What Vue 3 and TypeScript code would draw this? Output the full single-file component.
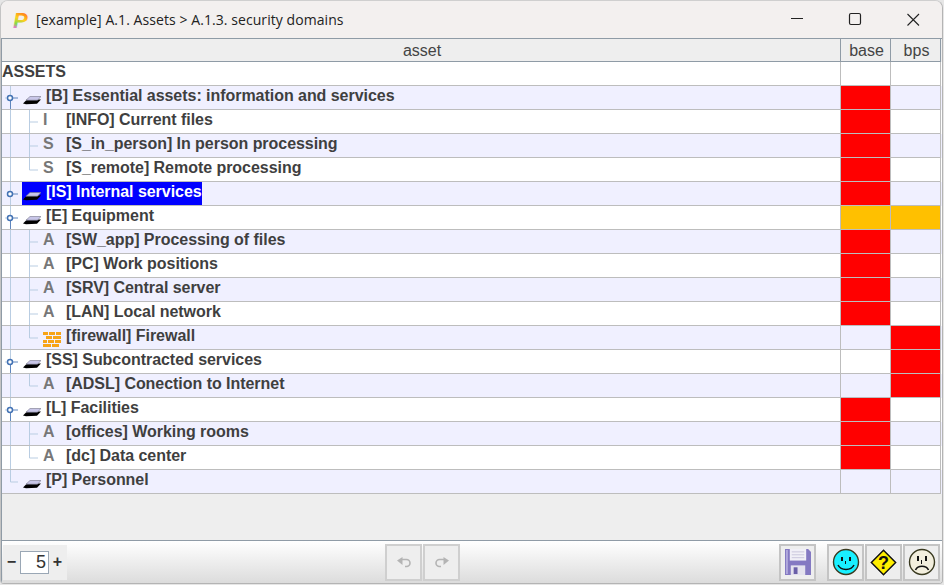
<template>
  <div class="window">
    <div class="titlebar">
      <svg class="logo" width="18" height="28" viewBox="0 0 18 28">
        <defs>
          <linearGradient id="logoGrad" gradientUnits="userSpaceOnUse" x1="10" y1="6" x2="3" y2="22">
            <stop offset="0" stop-color="#ff7f1c" />
            <stop offset="0.4" stop-color="#ffcf1f" />
            <stop offset="0.75" stop-color="#7fdc4a" />
            <stop offset="1" stop-color="#ee6fd4" />
          </linearGradient>
        </defs>
        <text x="1" y="21.500" class="logo-p" fill="url(#logoGrad)">P</text>
      </svg>
      <span class="title">[example] A.1. Assets &gt; A.1.3. security domains</span>
      <div class="winbtns">
        <svg width="58" height="37" viewBox="0 0 58 37"><path d="M23 17.500h12" stroke="#222" /></svg>
        <svg width="58" height="37" viewBox="0 0 58 37"><rect x="23.500" y="12.500" width="11" height="11" rx="1.500" fill="none" stroke="#222" stroke-width="1.200" /></svg>
        <svg width="58" height="37" viewBox="0 0 58 37"><path d="M23.500 13l11.500 11.500M35 13l-11.500 11.500" stroke="#222" stroke-width="1.100" fill="none" /></svg>
      </div>
    </div>

    <div class="body">
      <div class="grid head">
        <div class="hcell">asset</div>
        <div class="hcell">base</div>
        <div class="hcell">bps</div>
      </div>

      <div
        v-for="(row, i) in rows"
        :key="row.label"
        class="grid row"
        :class="{ alt: i % 2 === 1 }"
      >
        <div class="cell tree">
          <svg v-if="row.depth > 0" :width="row.depth === 1 ? 20 : 40" height="23" class="lines">
            <path :d="row.lastTop ? 'M8.500 0V12' : 'M8.500 0V23'" stroke="#b9cde2" fill="none" />
            <template v-if="row.depth === 1">
              <path d="M8.500 12H16" :stroke="row.state === 'leaf' ? '#b9cde2' : '#5f86bd'" fill="none" />
              <path v-if="row.state === 'open'" d="M8.500 12V23" stroke="#5f86bd" fill="none" />
              <path v-if="row.state === 'open'" d="M3 12H8" stroke="#b9cde2" fill="none" />
              <circle v-if="row.state !== 'leaf'" cx="8" cy="12" r="2.500" fill="#fff" stroke="#4272b4" stroke-width="1.500" />
            </template>
            <path v-else :d="row.lastChild ? 'M27.500 0V12H36' : 'M27.500 0V23M27.500 12H36'" stroke="#b9cde2" fill="none" />
          </svg>

          <div class="label" :class="{ selected: row.selected }">
            <svg v-if="row.depth === 1" class="slab" width="18" height="9" viewBox="0 0 18 9">
              <path d="M0 7.500L4 3.500H18L14 7.800L3 8.300Z" fill="#000" />
              <path d="M3 4.200L7 .5H18L14.500 4.200Z" fill="#c8c6e8" stroke="#77778c" stroke-width=".6" />
            </svg>
            <span v-if="row.letter" class="letter">{{ row.letter }}</span>
            <svg v-if="row.wall" class="wall" width="18" height="15" viewBox="0 0 18 15">
              <path
                d="M0 0h5v3H0zM6 0h6v3H6zM13 0h5v3h-5zM3 4h6v3H3zM10 4h8v3h-8zM0 8h4v3H0zM5 8h6v3H5zM12 8h6v3h-6zM0 12h8v3H0zM9 12h7v3H9z"
                fill="#f7a417"
              />
            </svg>
            <span class="text">{{ row.label }}</span>
          </div>
        </div>
        <div class="cell" :class="row.base"></div>
        <div class="cell" :class="row.bps"></div>
      </div>

      <div class="filler"></div>

      <div class="toolbar">
        <div class="stepper">
          <span class="step">−</span>
          <input class="num" value="5" readonly />
          <span class="step">+</span>
        </div>
        <div class="undo">
          <button class="tbtn" aria-label="undo">
            <svg width="16" height="12" viewBox="0 0 16 12">
              <path d="M5 3.500h5.500a3.500 3.500 0 0 1 0 7H9" fill="none" stroke="#b4b4b4" stroke-width="1.600" />
              <path d="M1 4.500L6.500 1V9Z" fill="#b4b4b4" />
            </svg>
          </button>
          <button class="tbtn" aria-label="redo">
            <svg width="16" height="12" viewBox="0 0 16 12">
              <path d="M11 3.500H5.500a3.500 3.500 0 0 0 0 7H7" fill="none" stroke="#b4b4b4" stroke-width="1.600" />
              <path d="M15 4.500L9.500 1V9Z" fill="#b4b4b4" />
            </svg>
          </button>
        </div>
        <div class="right">
          <button class="tbtn light save" aria-label="save">
            <svg width="26" height="26" viewBox="0 0 27 27">
              <path d="M0 0H24L27 3V27H0Z" fill="#8479c2" />
              <path d="M1 1V26H3V1Z" fill="#b0a9dc" />
              <rect x="5" y="0" width="17" height="12" fill="#f1f0f7" />
              <path d="M7 3h13M7 6h13M7 9h13" stroke="#c9c6dc" />
              <rect x="6" y="17" width="15" height="10" fill="#e4e2ee" />
              <rect x="9" y="19" width="4" height="7" fill="#6a5fa8" />
            </svg>
          </button>
          <div class="moods">
            <button class="tbtn" aria-label="happy">
              <svg width="28" height="28" viewBox="0 0 28 28">
                <circle cx="14" cy="14" r="12.500" fill="#19f0ff" stroke="#3a3a20" stroke-width="1.400" />
                <rect x="9" y="9" width="2" height="4" fill="#111" />
                <rect x="17" y="9" width="2" height="4" fill="#111" />
                <path d="M13.500 13v3" stroke="#111" />
                <path d="M6 17c3 6 13 6 16 0" fill="none" stroke="#111" stroke-width="1.500" />
              </svg>
            </button>
            <button class="tbtn" aria-label="unknown">
              <svg width="27" height="27" viewBox="0 0 30 30">
                <path d="M15 1.500L28.500 15L15 28.500L1.500 15Z" fill="#ffee00" stroke="#111" stroke-width="1.600" />
                <text x="15" y="22" class="qm">?</text>
              </svg>
            </button>
            <button class="tbtn" aria-label="sad">
              <svg width="28" height="28" viewBox="0 0 28 28">
                <circle cx="14" cy="14" r="12.500" fill="#f2eedd" stroke="#3a3a20" stroke-width="1.400" />
                <rect x="9" y="8" width="2" height="5" fill="#111" />
                <rect x="17" y="8" width="2" height="5" fill="#111" />
                <path d="M13.500 12v4" stroke="#111" />
                <path d="M7.500 22c2.500-5 10.500-5 13 0" fill="none" stroke="#111" stroke-width="1.600" />
              </svg>
            </button>
          </div>
        </div>
      </div>
    </div>
  </div>
</template>

<script setup lang="ts">
type Mark = '' | 'red' | 'amber'

interface Row {
  label: string
  depth: number
  state?: 'open' | 'closed' | 'leaf'
  letter?: string
  wall?: boolean
  selected?: boolean
  lastChild?: boolean
  lastTop?: boolean
  base: Mark
  bps: Mark
}

const rows: Row[] = [
  { label: 'ASSETS', depth: 0, base: '', bps: '' },
  { label: '[B] Essential assets: information and services', depth: 1, state: 'open', base: 'red', bps: '' },
  { label: '[INFO] Current files', depth: 2, letter: 'I', base: 'red', bps: '' },
  { label: '[S_in_person] In person processing', depth: 2, letter: 'S', base: 'red', bps: '' },
  { label: '[S_remote] Remote processing', depth: 2, letter: 'S', lastChild: true, base: 'red', bps: '' },
  { label: '[IS] Internal services', depth: 1, state: 'closed', selected: true, base: 'red', bps: '' },
  { label: '[E] Equipment', depth: 1, state: 'open', base: 'amber', bps: 'amber' },
  { label: '[SW_app] Processing of files', depth: 2, letter: 'A', base: 'red', bps: '' },
  { label: '[PC] Work positions', depth: 2, letter: 'A', base: 'red', bps: '' },
  { label: '[SRV] Central server', depth: 2, letter: 'A', base: 'red', bps: '' },
  { label: '[LAN] Local network', depth: 2, letter: 'A', base: 'red', bps: '' },
  { label: '[firewall] Firewall', depth: 2, wall: true, lastChild: true, base: '', bps: 'red' },
  { label: '[SS] Subcontracted services', depth: 1, state: 'open', base: '', bps: 'red' },
  { label: '[ADSL] Conection to Internet', depth: 2, letter: 'A', lastChild: true, base: '', bps: 'red' },
  { label: '[L] Facilities', depth: 1, state: 'open', base: 'red', bps: '' },
  { label: '[offices] Working rooms', depth: 2, letter: 'A', base: 'red', bps: '' },
  { label: '[dc] Data center', depth: 2, letter: 'A', lastChild: true, base: 'red', bps: '' },
  { label: '[P] Personnel', depth: 1, state: 'leaf', lastTop: true, base: '', bps: '' },
]
</script>

<style>
html,
body {
  margin: 0;
  background: #e6e6e6;
}
</style>

<style scoped>
.window {
  width: 943px;
  height: 584px;
  display: flex;
  flex-direction: column;
  background: #efefef;
  border: 1px solid #b4b4b4;
  border-top-color: #cfcfcf;
  border-left-color: #c4c4c4;
  border-radius: 8px 8px 4px 4px;
  box-sizing: border-box;
  overflow: hidden;
}
.titlebar {
  height: 37px;
  flex: none;
  display: flex;
  align-items: center;
  background: #f3f0ef;
}
.logo {
  margin-left: 11px;
  flex: none;
}
.logo-p {
  font: italic bold 22px "Liberation Sans", sans-serif;
}
.title {
  margin-left: 6px;
  font: 14px "Open Sans", sans-serif;
  letter-spacing: 0.07px;
  color: #222;
}
.winbtns {
  margin-left: auto;
  display: flex;
}
.body {
  flex: 1;
  display: flex;
  flex-direction: column;
  border-top: 1px solid #8f9ba6;
  border-left: 1px solid #8f9ba6;
  font-family: "Liberation Sans", Arial, sans-serif;
  min-height: 0;
}
.grid {
  display: grid;
  grid-template-columns: 839px 50px 50px;
  flex: none;
}
.hcell {
  height: 22px;
  padding-left: 2px;
  border-right: 1px solid #8f9ba6;
  border-bottom: 1px solid #8f9ba6;
  text-align: center;
  font-size: 16px;
  line-height: 23px;
  color: #444;
  background: #eeeeee;
}
.row {
  height: 24px;
  background: #fff;
}
.row.alt {
  background: #f0f0ff;
}
.cell {
  height: 23px;
  border-right: 1px solid #bdbdbd;
  border-bottom: 1px solid #bdbdbd;
}
.cell.red {
  background: #ff0000;
}
.cell.amber {
  background: #ffc000;
}
.tree {
  display: flex;
  align-items: stretch;
}
.lines {
  flex: none;
}
.label {
  display: flex;
  align-items: center;
  font-size: 16px;
  font-weight: bold;
  letter-spacing: -0.04px;
  color: #3f3f3f;
}
.label.selected {
  background: #0000ff;
  color: #fff;
}
.text,
.letter {
  padding-bottom: 4px;
}
.slab {
  margin: 6px 5px 0 1px;
}
.letter {
  width: 24px;
  padding-left: 1px;
  box-sizing: border-box;
  color: #777;
}
.wall {
  margin: 3px 5px 0 1px;
}
.filler {
  flex: 1;
  background: #eeeeee;
}
.toolbar {
  height: 42px;
  flex: none;
  display: flex;
  align-items: center;
  border-top: 1px solid #8f9ba6;
  background: linear-gradient(#ffffff, #dcdcdc);
}
.stepper {
  margin-left: 1px;
  width: 64px;
  height: 35px;
  box-sizing: border-box;
  display: flex;
  align-items: center;
  background: #eeeeee;
  flex: none;
}
.step {
  width: 17px;
  text-align: center;
  font-size: 16px;
  font-weight: bold;
  color: #333;
}
.num {
  width: 29px;
  height: 23px;
  box-sizing: border-box;
  border: 1px solid #9aa7b5;
  background: #fff;
  padding: 0 2px 0 0;
  text-align: right;
  font: 18px "Liberation Sans", sans-serif;
  color: #333;
  outline: none;
}
.undo {
  margin-left: 318px;
  display: flex;
  gap: 1px;
}
.tbtn {
  width: 37px;
  height: 37px;
  padding: 0;
  box-sizing: border-box;
  border: 2px solid #cfcfcf;
  background: #eeeeee;
  display: flex;
  align-items: center;
  justify-content: center;
}
.tbtn.light {
  border-color: #c4c4c4;
}
.right {
  margin-left: auto;
  margin-right: 2px;
  display: flex;
  gap: 11px;
}
.moods {
  display: flex;
  gap: 1px;
}
.moods .tbtn {
  border-color: #c4c4c4;
}
.qm {
  font: bold 20px "Liberation Sans", sans-serif;
  text-anchor: middle;
  fill: #111;
}
</style>
